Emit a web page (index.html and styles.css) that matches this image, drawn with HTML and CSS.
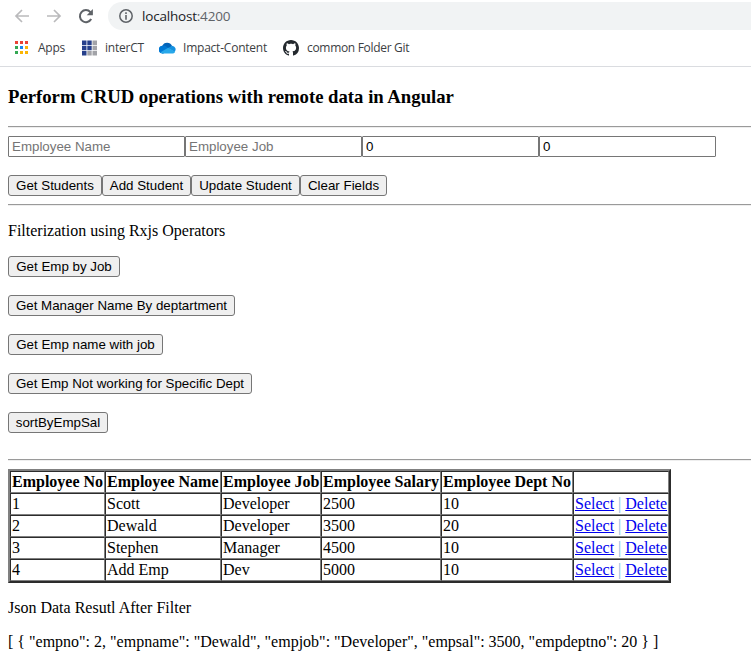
FILE: index.html
```html
<!DOCTYPE html>
<html lang="en">
<head>
<meta charset="utf-8">
<title>CRUD operations</title>
<link rel="stylesheet" href="styles.css">
</head>
<body>
<header class="browser">
  <div class="toolbar">
    <svg class="nav" width="16" height="16" viewBox="0 0 16 16"><path d="M15 8H2M8 2L2 8l6 6" fill="none" stroke="#bababc" stroke-width="1.7"/></svg>
    <svg class="nav" width="16" height="16" viewBox="0 0 16 16"><path d="M1 8h13M8 2l6 6-6 6" fill="none" stroke="#bababc" stroke-width="1.7"/></svg>
    <svg class="nav" width="16" height="16" viewBox="0 0 16 16"><path d="M13.2 11A6 6 0 1 1 12.4 4.1L14 5.7" fill="none" stroke="#5f6368" stroke-width="2"/><path d="M14.9 1v6.2H8.7z" fill="#5f6368"/></svg>
    <div class="address">
      <svg width="14" height="14" viewBox="0 0 14 14"><circle cx="7" cy="7" r="6.2" fill="none" stroke="#5f6368" stroke-width="1.5"/><path d="M6.2 3.3h1.6v1.6H6.2zM6.2 6h1.6v4.7H6.2z" fill="#5f6368"/></svg>
      <span class="url">localhost<span class="port">:4200</span></span>
    </div>
  </div>
  <nav class="bookmarks">
    <a class="bookmark apps"><svg width="13" height="14" viewBox="0 0 13 14"><path d="M0 0h3v3H0zM5 0h3v3H5zM10 0h3v3h-3z" fill="#ea4335"/><path d="M0 5h3v3H0zM0 10h3v3H0z" fill="#34a853"/><path d="M5 5h3v3H5z" fill="#1a86f0"/><path d="M10 5h3v3h-3zM5 10h3v3H5zM10 10h3v3h-3z" fill="#fbb505"/></svg><span>Apps</span></a>
    <a class="bookmark inter"><svg width="15" height="16" viewBox="0 0 15 16"><path d="M0 .5h4.5V5H0zM5.3 .5h4.4V5H5.3zM0 5.8h4.5v4.4H0zM5.3 5.8h4.4v4.4H5.3zM0 11h4.5v4.5H0z" fill="#27408b"/><path d="M10.5 .5H15V5h-4.5zM10.5 5.8H15v4.4h-4.5zM5.3 11h4.4v4.5H5.3zM10.5 11H15v4.5h-4.5z" fill="#a2a3a8"/></svg><span>interCT</span></a>
    <a class="bookmark impact"><svg width="17" height="12" viewBox="0 0 17 12"><path d="M4 11.5A3.9 3.9 0 0 1 3.2 4 5.4 5.4 0 0 1 13 3.7L9 9z" fill="#0364b8"/><path d="M3.8 11.5A3.9 3.9 0 0 1 3.4 3.7c1.8-.4 3 .3 4.3 1.1L12 8.5z" fill="#0078d4"/><path d="M9 6l4-2.3a3.7 3.7 0 0 1 2.4 6.4z" fill="#1490df"/><path d="M4 11.5H13.2c1.5 0 2.5-.7 3-1.8L9.2 5.8 1.6 10.3c.6.8 1.4 1.2 2.4 1.2z" fill="#28a8ea"/></svg><span>Impact-Content</span></a>
    <a class="bookmark git"><svg width="16" height="16" viewBox="0 0 16 16"><path fill="#24292e" d="M8 0C3.58 0 0 3.58 0 8c0 3.54 2.29 6.53 5.47 7.59.4.07.55-.17.55-.38 0-.19-.01-.82-.01-1.49-2.01.37-2.53-.49-2.69-.94-.09-.23-.48-.94-.82-1.13-.28-.15-.68-.52-.01-.53.63-.01 1.08.58 1.23.82.72 1.21 1.87.87 2.33.66.07-.52.28-.87.51-1.07-1.78-.2-3.64-.89-3.64-3.95 0-.87.31-1.59.82-2.15-.08-.2-.36-1.02.08-2.12 0 0 .67-.21 2.2.82.64-.18 1.32-.27 2-.27s1.36.09 2 .27c1.53-1.04 2.2-.82 2.2-.82.44 1.1.16 1.92.08 2.12.51.56.82 1.27.82 2.15 0 3.07-1.87 3.75-3.65 3.95.29.25.54.73.54 1.48 0 1.07-.01 1.93-.01 2.2 0 .21.15.46.55.38A8.01 8.01 0 0 0 16 8c0-4.42-3.58-8-8-8z"/></svg><span>common Folder Git</span></a>
  </nav>
</header>
<main class="page">
  <h3>Perform CRUD operations with remote data in Angular</h3>
  <hr>
  <div class="row"><input type="text" placeholder="Employee Name"><input type="text" placeholder="Employee Job"><input type="text" value="0"><input type="text" value="0"></div>
  <div class="row actions"><button class="w94">Get Students</button><button class="w89">Add Student</button><button class="w109">Update Student</button><button class="w87">Clear Fields</button></div>
  <hr>
  <p>Filterization using Rxjs Operators</p>
  <div class="filters">
    <button class="w112">Get Emp by Job</button>
    <button class="w227">Get Manager Name By deptartment</button>
    <button class="w155">Get Emp name with job</button>
    <button class="w244">Get Emp Not working for Specific Dept</button>
    <button class="w100">sortByEmpSal</button>
  </div>
  <hr>
  <table>
    <colgroup><col class="c-no"><col class="c-name"><col class="c-job"><col class="c-sal"><col class="c-dept"><col class="c-act"></colgroup>
    <tr><th>Employee No</th><th>Employee Name</th><th>Employee Job</th><th>Employee Salary</th><th>Employee Dept No</th><th></th></tr>
    <tr><td>1</td><td>Scott</td><td>Developer</td><td>2500</td><td>10</td><td><a href="#">Select</a> <span class="bar">|</span> <a href="#">Delete</a></td></tr>
    <tr><td>2</td><td>Dewald</td><td>Developer</td><td>3500</td><td>20</td><td><a href="#">Select</a> <span class="bar">|</span> <a href="#">Delete</a></td></tr>
    <tr><td>3</td><td>Stephen</td><td>Manager</td><td>4500</td><td>10</td><td><a href="#">Select</a> <span class="bar">|</span> <a href="#">Delete</a></td></tr>
    <tr><td>4</td><td>Add Emp</td><td>Dev</td><td>5000</td><td>10</td><td><a href="#">Select</a> <span class="bar">|</span> <a href="#">Delete</a></td></tr>
  </table>
  <p>Json Data Resutl After Filter</p>
  <p>[ { "empno": 2, "empname": "Dewald", "empjob": "Developer", "empsal": 3500, "empdeptno": 20 } ]</p>
</main>
</body>
</html>
```
FILE: styles.css
```css
* { box-sizing: border-box; }
html { overflow: hidden; }
body { margin: 0; background: #fff; color: #000; font: 16px/18px "Liberation Serif", "Times New Roman", serif; }
.browser { height: 67px; border-bottom: 1px solid #dadce0; font-family: "Open Sans", sans-serif; color: #3c4043; }
.toolbar { display: flex; align-items: center; height: 32px; padding-left: 14px; gap: 16px; }
.nav { flex: none; }
.address { display: flex; align-items: center; flex: 1; height: 28px; margin-left: -2px; padding-left: 11px; gap: 9px; background: #f1f3f4; border-radius: 14px 0 0 14px; }
.url { font-size: 13.5px; color: #202124; letter-spacing: -0.2px; }
.port { color: #5f6368; }
.bookmarks { display: flex; align-items: center; height: 32px; padding-left: 15px; font-size: 12px; letter-spacing: -0.22px; white-space: nowrap; }
.bookmark { display: flex; align-items: center; }
.apps { width: 67px; gap: 10px; }
.inter { width: 77px; gap: 8px; }
.impact { width: 124px; gap: 7px; }
.git { gap: 8px; letter-spacing: -0.31px; }
.page { padding: 19px 0 0 8px; }
h3 { margin: 0 0 19px; font-size: 18.72px; line-height: 21px; font-weight: bold; }
hr { height: 2px; margin: 8px 0; border: 0; border-top: 1px solid #9a9a9a; border-bottom: 1px solid #eee; }
p { margin: 16px 0; }
.row { display: flex; }
.actions { margin-top: 18px; }
input { width: 177px; height: 21px; margin: 0; padding: 1px 3px; border: 1px solid #767676; border-radius: 1px; font: 13.333px "Liberation Sans", Arial, sans-serif; color: #000; }
input::placeholder { color: #757575; }
button { height: 21px; margin: 0; padding: 0; border: 1px solid #767676; border-radius: 3px; background: #efefef; color: #000; font: 13.333px/19px "Liberation Sans", Arial, sans-serif; white-space: nowrap; }
.filters { display: flex; flex-direction: column; align-items: flex-start; gap: 18px; padding-bottom: 18px; }
.w94 { width: 94px; }
.w89 { width: 89px; }
.w109 { width: 109px; }
.w87 { width: 87px; }
.w112 { width: 112px; }
.w227 { width: 227px; }
.w155 { width: 155px; }
.w244 { width: 244px; }
.w100 { width: 100px; }
table { width: 663px; table-layout: fixed; border-spacing: 0; border: 2px solid; border-color: #808080 #2c2c2c #2c2c2c #808080; }
th, td { height: 22px; padding: 1px; border: 1px solid; border-color: #2c2c2c #808080 #808080 #2c2c2c; line-height: 18px; text-align: left; white-space: nowrap; }
.c-no { width: 95px; }
.c-name { width: 116px; }
.c-job { width: 100px; }
.c-sal { width: 120px; }
.c-dept { width: 132px; }
.c-act { width: 96px; }
a[href] { color: #0000ee; }
.bar { color: #78b8d8; }
```
